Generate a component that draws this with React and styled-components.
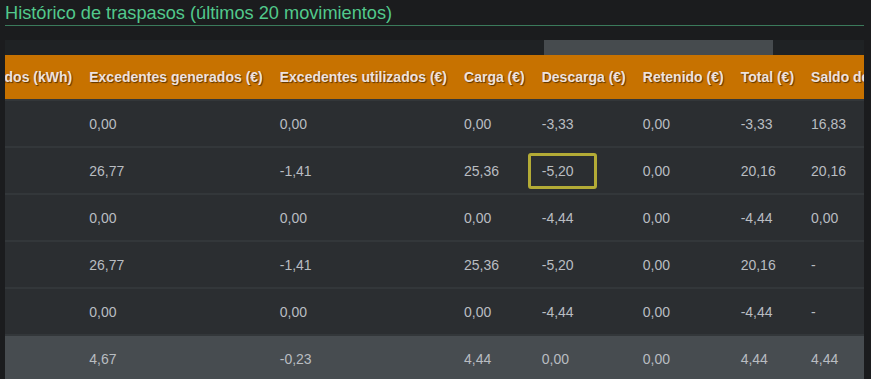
import { useLayoutEffect, useRef } from 'react';
import styled, { createGlobalStyle } from 'styled-components';

const GlobalStyle = createGlobalStyle`
   body {
      margin: 0;
      background: #1b1c1e;
      font-family: "Liberation Sans", Arial, sans-serif;
   }
`

const Page = styled.div`
   padding: 0 7px 0 5px;
`

const Title = styled.h2`
   margin: 0;
   padding-top: 2px;
   font-size: 18.2px;
   line-height: 23px;
   font-weight: normal;
   color: #52c98c;
   border-bottom: 1px solid #3b7a5b;
`

const Track = styled.div`
   margin-top: 14px;
   height: 15px;
   background: #1f2224;
   display: flex;
`

const Thumb = styled.div`
   margin-left: ${p => p.$left}px;
   width: ${p => p.$width}px;
   background: #464b4e;
`

const Scroller = styled.div`
   overflow: hidden;
`

const Table = styled.table`
   border-collapse: collapse;
   white-space: nowrap;
   font-size: 14px;
`

const Head = styled.th`
   height: 44px;
   padding: 0 8.5px;
   text-align: left;
   background: #c77200;
   color: #eee2de;
   font-weight: bold;
   text-shadow: 1px 1px 1px #5a3300;
`

const Row = styled.tr`
   border-top: 2px solid #33373a;
   background: ${p => (p.$total ? '#474c50' : '#2b2e31')};
`

const Cell = styled.td`
   height: 45px;
   padding: 0 8.5px;
   color: #b9bdc1;
`

const Marked = styled.span`
   padding: 7px 20px 7px 11px;
   margin: 0 -23px 0 -14px;
   border: 3px solid #b3ab36;
   border-radius: 3px;
`

const columns = [
   'Fecha',
   'Consumo (kWh)',
   'Excedentes generados (kWh)',
   'Excedentes utilizados (kWh)',
   'Excedentes generados (€)',
   'Excedentes utilizados (€)',
   'Carga (€)',
   'Descarga (€)',
   'Retenido (€)',
   'Total (€)',
   'Saldo de la batería (€)',
]

const rows = [
   ['01/06/2024', '112,40', '0,00', '0,00', '0,00', '0,00', '0,00', '-3,33', '0,00', '-3,33', '16,83'],
   ['01/05/2024', '98,12', '187,20', '-9,85', '26,77', '-1,41', '25,36', '-5,20', '0,00', '20,16', '20,16'],
   ['01/04/2024', '120,55', '0,00', '0,00', '0,00', '0,00', '0,00', '-4,44', '0,00', '-4,44', '0,00'],
   ['01/03/2024', '98,12', '187,20', '-9,85', '26,77', '-1,41', '25,36', '-5,20', '0,00', '20,16', '-'],
   ['01/02/2024', '120,55', '0,00', '0,00', '0,00', '0,00', '0,00', '-4,44', '0,00', '-4,44', '-'],
]

const totals = ['Total', '549,74', '374,40', '-19,70', '4,67', '-0,23', '4,44', '0,00', '0,00', '4,44', '4,44']

function App() {
   const scroller = useRef(null);
   const firstEuro = useRef(null);

   // la tabla arranca desplazada hasta las columnas en euros
   useLayoutEffect(() => {
      if (scroller.current && firstEuro.current) {
         scroller.current.scrollLeft = firstEuro.current.offsetLeft - 76;
      }
   }, []);

   return (
      <Page>
         <GlobalStyle />
         <Title>Histórico de traspasos (últimos 20 movimientos)</Title>
         <Track>
            <Thumb $left={539} $width={229} />
         </Track>
         <Scroller ref={scroller}>
            <Table>
               <thead>
                  <tr>
                     {columns.map((c, i) => (
                        <Head key={c} ref={i === 4 ? firstEuro : null}>{c}</Head>
                     ))}
                  </tr>
               </thead>
               <tbody>
                  {rows.map((r, ri) => (
                     <Row key={ri}>
                        {r.map((v, ci) => (
                           <Cell key={ci}>
                              {ri === 1 && ci === 7 ? <Marked>{v}</Marked> : v}
                           </Cell>
                        ))}
                     </Row>
                  ))}
                  <Row $total>
                     {totals.map((v, ci) => (
                        <Cell key={ci}>{v}</Cell>
                     ))}
                  </Row>
               </tbody>
            </Table>
         </Scroller>
      </Page>
   )
}

export default App;
